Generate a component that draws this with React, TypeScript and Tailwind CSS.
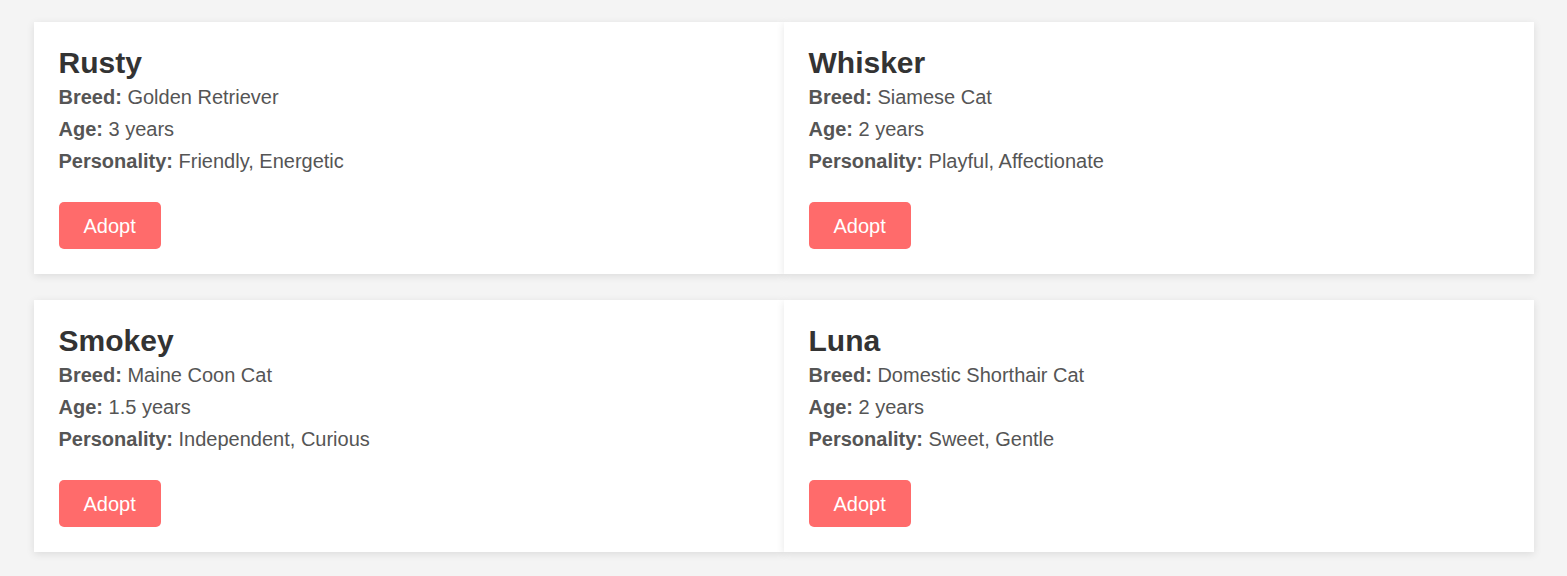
import React from "react";

const pets = [
  { name: "Rusty", breed: "Golden Retriever", age: "3 years", personality: "Friendly, Energetic" },
  { name: "Whisker", breed: "Siamese Cat", age: "2 years", personality: "Playful, Affectionate" },
  { name: "Smokey", breed: "Maine Coon Cat", age: "1.5 years", personality: "Independent, Curious" },
  { name: "Luna", breed: "Domestic Shorthair Cat", age: "2 years", personality: "Sweet, Gentle" },
];

export default function App() {
  return (
    <div
      className="min-h-[576px] bg-[#f4f4f4] pt-[22px] pb-6"
      style={{ fontFamily: '"Liberation Sans", Arial, sans-serif' }}
    >
      <div className="mx-auto grid w-[1500px] grid-cols-2 gap-y-[26px]">
        {pets.map((pet) => (
          <div
            key={pet.name}
            className="bg-white p-[25px] shadow-[0_2px_8px_rgba(0,0,0,0.1)]"
          >
            <h3 className="mb-[2px] text-[30px] leading-8 font-bold text-[#333]">{pet.name}</h3>
            <p className="text-[20px] leading-8 text-[#555]">
              <strong>Breed:</strong> {pet.breed}
            </p>
            <p className="text-[20px] leading-8 text-[#555]">
              <strong>Age:</strong> {pet.age}
            </p>
            <p className="text-[20px] leading-8 text-[#555]">
              <strong>Personality:</strong> {pet.personality}
            </p>
            <button className="mt-[25px] h-[47px] rounded-[5px] bg-[#ff6b6b] px-[25px] text-[20px] leading-6 text-white">
              Adopt
            </button>
          </div>
        ))}
      </div>
    </div>
  );
}
